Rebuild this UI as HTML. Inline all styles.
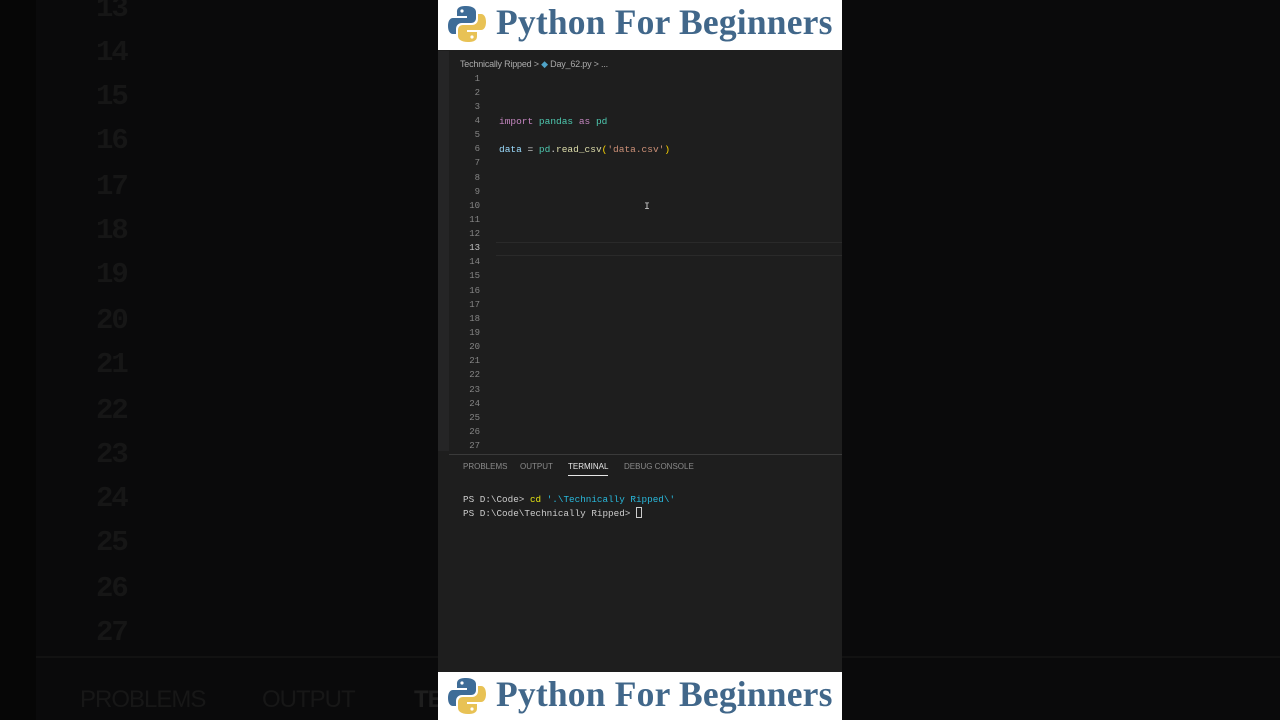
<!DOCTYPE html>
<html><head><style>
*{margin:0;padding:0;box-sizing:border-box}
body{width:1280px;height:720px;background:#0a0a0b;position:relative;overflow:hidden;font-family:"Liberation Sans",sans-serif}
.abs{position:absolute}
.bignum{position:absolute;left:96px;font:bold 29px "Liberation Mono",monospace;color:#161616;letter-spacing:-2px}
.panel{position:absolute;left:438px;top:0;width:404px;height:720px;background:#1e1e1e}
.hdr{position:absolute;left:0;width:404px;height:50px;background:#fff}
.title{position:absolute;left:58px;top:1px;font:bold 35.5px "Liberation Serif",serif;color:#41678a;white-space:nowrap;letter-spacing:0.2px}
.ln{position:absolute;left:22px;width:20px;text-align:right;font:9px "Liberation Mono",monospace;color:#858585}
.code{position:absolute;left:61px;font:9.5px "Liberation Mono",monospace;color:#d4d4d4;white-space:pre}
.tab{position:absolute;top:462px;font:8px "Liberation Sans",sans-serif;color:#8a8a8a}
.term{position:absolute;left:25px;font:9.3px "Liberation Mono",monospace;color:#ccc;white-space:pre}
.bt{position:absolute;top:686px;font:24px 'Liberation Sans',sans-serif;color:#171717;letter-spacing:-1px}
</style></head><body>
<div class="abs" style="left:0;top:0;width:36px;height:720px;background:#060606"></div>
<div class="bignum" style="top:-8px">13</div>
<div class="bignum" style="top:36px">14</div>
<div class="bignum" style="top:80px">15</div>
<div class="bignum" style="top:124px">16</div>
<div class="bignum" style="top:170px">17</div>
<div class="bignum" style="top:214px">18</div>
<div class="bignum" style="top:258px">19</div>
<div class="bignum" style="top:304px">20</div>
<div class="bignum" style="top:348px">21</div>
<div class="bignum" style="top:394px">22</div>
<div class="bignum" style="top:438px">23</div>
<div class="bignum" style="top:482px">24</div>
<div class="bignum" style="top:526px">25</div>
<div class="bignum" style="top:572px">26</div>
<div class="bignum" style="top:616px">27</div>
<div class="abs" style="left:36px;top:656px;width:1244px;height:2px;background:#121212"></div>
<div class="bt" style="left:80px">PROBLEMS</div>
<div class="bt" style="left:262px">OUTPUT</div>
<div class="bt" style="left:414px;font-weight:bold;color:#1e1e1e">TE</div>

<div class="panel">
<div class="hdr" style="top:0">
<svg class="abs" style="left:9px;top:4px" width="40" height="40" viewBox="0 0 40 40"><path d="M19 2c-8 0-9 3-9 6v4h10v2H6c-3 0-5 3-5 8s2 8 5 8h3v-5c0-3 2-6 6-6h9c3 0 5-2 5-5V8c0-3-3-6-10-6z" fill="#3e6c97"/><circle cx="15" cy="7" r="1.6" fill="#fff"/><path d="M21 38c8 0 9-3 9-6v-4H20v-2h14c3 0 5-3 5-8s-2-8-5-8h-3v5c0 3-2 6-6 6h-9c-3 0-5 2-5 5v6c0 3 3 6 10 6z" fill="#e8c255"/><circle cx="25" cy="33" r="1.6" fill="#fff"/></svg>
<div class="title">Python For Beginners</div>
</div>
<div class="abs" style="left:0;top:51px;width:11px;height:400px;background:#252526"></div>
<div class="abs" style="left:22px;top:59px;font:9px 'Liberation Sans',sans-serif;color:#aaa;white-space:nowrap;letter-spacing:-0.2px">Technically Ripped &gt; <span style="color:#4fa3c7">◆</span> Day_62.py &gt; ...</div>
<div class="abs" style="left:58px;top:242px;width:346px;height:14px;border-top:1px solid #2a2a2a;border-bottom:1px solid #2a2a2a"></div>
<div class="ln" style="top:74px">1</div><div class="ln" style="top:88px">2</div><div class="ln" style="top:102px">3</div><div class="ln" style="top:116px">4</div><div class="ln" style="top:130px">5</div><div class="ln" style="top:144px">6</div><div class="ln" style="top:158px">7</div><div class="ln" style="top:173px">8</div><div class="ln" style="top:187px">9</div><div class="ln" style="top:201px">10</div><div class="ln" style="top:215px">11</div><div class="ln" style="top:229px">12</div><div class="ln" style="top:243px;color:#c6c6c6">13</div><div class="ln" style="top:257px">14</div><div class="ln" style="top:271px">15</div><div class="ln" style="top:286px">16</div><div class="ln" style="top:300px">17</div><div class="ln" style="top:314px">18</div><div class="ln" style="top:328px">19</div><div class="ln" style="top:342px">20</div><div class="ln" style="top:356px">21</div><div class="ln" style="top:370px">22</div><div class="ln" style="top:385px">23</div><div class="ln" style="top:399px">24</div><div class="ln" style="top:413px">25</div><div class="ln" style="top:427px">26</div><div class="ln" style="top:441px">27</div>
<div class="code" style="top:116px"><span style="color:#c586c0">import</span> <span style="color:#4ec9b0">pandas</span> <span style="color:#c586c0">as</span> <span style="color:#4ec9b0">pd</span></div>
<div class="code" style="top:144px"><span style="color:#9cdcfe">data</span> = <span style="color:#4ec9b0">pd</span>.<span style="color:#dcdcaa">read_csv</span><span style="color:#ffd700">(</span><span style="color:#ce9178">'data.csv'</span><span style="color:#ffd700">)</span></div>
<div class="abs" style="left:206px;top:202px;font:10px 'Liberation Mono',monospace;color:#ccc">I</div>
<div class="abs" style="left:11px;top:454px;width:393px;height:1px;background:#3a3a3a"></div>
<div class="tab" style="left:25px">PROBLEMS</div>
<div class="tab" style="left:82px">OUTPUT</div>
<div class="tab" style="left:130px;color:#e7e7e7">TERMINAL</div>
<div class="abs" style="left:130px;top:475px;width:40px;height:1px;background:#e7e7e7"></div>
<div class="tab" style="left:186px">DEBUG CONSOLE</div>
<div class="term" style="top:494px">PS D:\Code&gt; <span style="color:#e5e510">cd</span> <span style="color:#29b8db">'.\Technically Ripped\'</span></div>
<div class="term" style="top:507px">PS D:\Code\Technically Ripped&gt; <span style="display:inline-block;width:6px;height:11px;border:1px solid #ccc;vertical-align:-2px"></span></div>
<div class="hdr" style="top:672px;height:48px">
<svg class="abs" style="left:9px;top:4px" width="40" height="40" viewBox="0 0 40 40"><path d="M19 2c-8 0-9 3-9 6v4h10v2H6c-3 0-5 3-5 8s2 8 5 8h3v-5c0-3 2-6 6-6h9c3 0 5-2 5-5V8c0-3-3-6-10-6z" fill="#3e6c97"/><circle cx="15" cy="7" r="1.6" fill="#fff"/><path d="M21 38c8 0 9-3 9-6v-4H20v-2h14c3 0 5-3 5-8s-2-8-5-8h-3v5c0 3-2 6-6 6h-9c-3 0-5 2-5 5v6c0 3 3 6 10 6z" fill="#e8c255"/><circle cx="25" cy="33" r="1.6" fill="#fff"/></svg>
<div class="title">Python For Beginners</div>
</div>
</div>
</body></html>
